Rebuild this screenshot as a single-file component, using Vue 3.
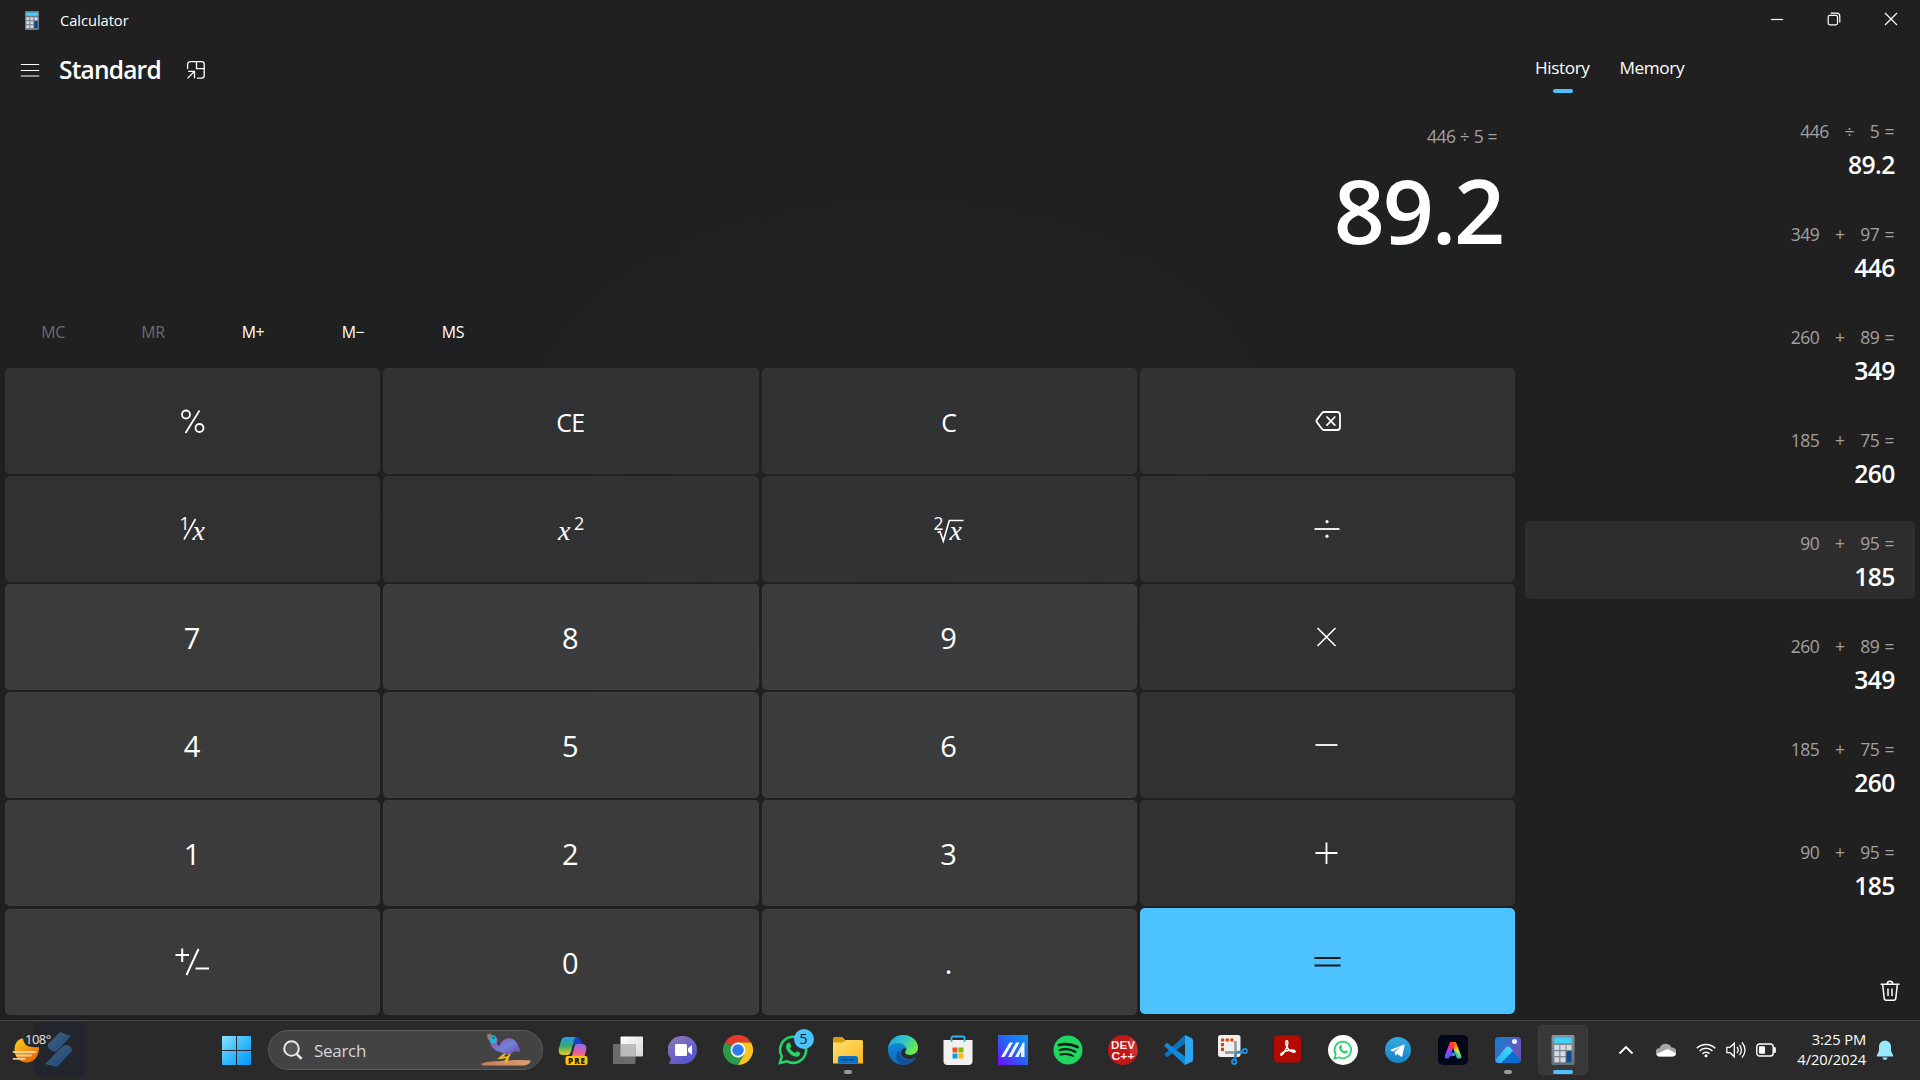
<script setup>
const memory = [
  { label: 'MC', off: true },
  { label: 'MR', off: true },
  { label: 'M+' },
  { label: 'M−' },
  { label: 'MS' },
]

const keys = [
  { icon: 'percent' }, { text: 'CE', fn: true }, { text: 'C', fn: true }, { icon: 'back' },
  { icon: 'inverse' }, { icon: 'square' }, { icon: 'root' }, { icon: 'divide' },
  { text: '7', num: true }, { text: '8', num: true }, { text: '9', num: true }, { icon: 'times' },
  { text: '4', num: true }, { text: '5', num: true }, { text: '6', num: true }, { icon: 'minus' },
  { text: '1', num: true }, { text: '2', num: true }, { text: '3', num: true }, { icon: 'plus' },
  { icon: 'sign', num: true, low: true }, { text: '0', num: true, low: true }, { text: '.', num: true, low: true }, { icon: 'equals', accent: true },
]

const history = [
  { expr: '446   ÷   5 =', result: '89.2' },
  { expr: '349   +   97 =', result: '446' },
  { expr: '260   +   89 =', result: '349' },
  { expr: '185   +   75 =', result: '260' },
  { expr: '90   +   95 =', result: '185', hover: true },
  { expr: '260   +   89 =', result: '349' },
  { expr: '185   +   75 =', result: '260' },
  { expr: '90   +   95 =', result: '185' },
]
</script>

<template>
  <div class="screen">
    <header class="titlebar">
      <svg class="app-icon" width="14" height="19" viewBox="0 0 14 19">
        <rect width="14" height="19" rx="1" fill="#6d7b87" />
        <rect x="1.3" y="1.5" width="11.4" height="3.3" fill="#3fd0fa" />
        <g fill="#d3dae2">
          <rect x="1.3" y="6.2" width="3" height="3" /><rect x="5.3" y="6.2" width="3" height="3" /><rect x="9.4" y="6.2" width="3.2" height="3" />
          <rect x="1.3" y="10.2" width="3" height="3" /><rect x="5.3" y="10.2" width="3" height="3" />
          <rect x="1.3" y="14.2" width="3" height="3" /><rect x="5.3" y="14.2" width="3" height="3" />
        </g>
        <rect x="9.4" y="10.2" width="3.2" height="7" fill="#0f4489" />
      </svg>
      <span class="app-name">Calculator</span>
      <div class="controls">
        <svg width="14" height="14" viewBox="0 0 14 14"><path d="M1 7.5h12" stroke="#fff" stroke-width="1.2" /></svg>
        <svg width="14" height="14" viewBox="0 0 14 14" fill="none" stroke="#fff" stroke-width="1.2"><rect x="1.2" y="3.3" width="9.3" height="9.5" rx="1.5" /><path d="M3.6 1.2h6.2a3 3 0 0 1 3 3v6.2" /></svg>
        <svg width="14" height="14" viewBox="0 0 14 14"><path d="M1 1l12 12M13 1L1 13" stroke="#fff" stroke-width="1.2" /></svg>
      </div>
    </header>

    <main class="body">
      <section class="calc">
        <div class="mode">
          <svg width="20" height="16" viewBox="0 0 20 16"><path d="M.8 2.5h18.4M.8 8.5h18.4M.8 14h18.4" stroke="#fff" stroke-width="1.2" /></svg>
          <h1>Standard</h1>
          <svg class="pin" width="20" height="20" viewBox="0 0 20 20" fill="none" stroke="#fff" stroke-width="1.3">
            <path d="M1.600 9V4.200a2.600 2.600 0 0 1 2.600-2.600h11.400a2.600 2.600 0 0 1 2.600 2.600v11.400a2.600 2.600 0 0 1-2.600 2.600H11" />
            <path d="M10.500 1.600v7h7.800M1.500 18.400l6.900-6.900M2.200 11.400h6.300v6.900" />
          </svg>
        </div>
        <div class="expression">446 ÷ 5 =</div>
        <div class="result">89.2</div>
        <div class="memory">
          <span v-for="m in memory" :key="m.label" :class="{ off: m.off }">{{ m.label }}</span>
        </div>
        <div class="pad">
          <div v-for="(k, i) in keys" :key="i" class="key" :class="{ num: k.num, fn: k.fn, accent: k.accent, low: k.low }">
            <span v-if="k.text">{{ k.text }}</span>
            <svg v-else width="40" height="40" viewBox="0 0 40 40" fill="none" stroke="#fff" stroke-width="1.8">
              <g v-if="k.icon === 'percent'"><circle cx="13" cy="13.500" r="4" /><circle cx="26.500" cy="27" r="4" /><path d="M26.500 9.500L12.500 32" /></g>
              <g v-else-if="k.icon === 'back'" stroke-linejoin="round" transform="translate(1 .5)"><path d="M16 10.500h13a3 3 0 0 1 3 3v12a3 3 0 0 1-3 3H16a2.500 2.500 0 0 1-2-1l-4.800-6.400a2.400 2.400 0 0 1 0-3.200L14 11.500a2.500 2.500 0 0 1 2-1z" /><path d="M18.500 15l8.800 9.200M27.300 15l-8.800 9.200" /></g>
              <g v-else-if="k.icon === 'inverse'">
                <path d="M22.500 10L11 30.500" stroke-width="1.600" />
                <text class="glyph" x="6.500" y="20.500" font-size="18">1</text>
                <text class="glyph italic" x="19.500" y="30.500" font-size="28">x</text>
              </g>
              <g v-else-if="k.icon === 'square'">
                <text class="glyph italic" x="7" y="30.500" font-size="28">x</text>
                <text class="glyph" x="23" y="21" font-size="18">2</text>
              </g>
              <g v-else-if="k.icon === 'root'">
                <text class="glyph" x="4.500" y="20.500" font-size="17.500">2</text>
                <path d="M8.500 23.500l2.500-1 3.300 9.500L20.300 11.500H34.500" stroke-width="1.600" />
                <text class="glyph italic" x="20.500" y="30.500" font-size="28">x</text>
              </g>
              <g v-else-if="k.icon === 'divide'"><path d="M7.500 20h25" /><g fill="#fff" stroke="none"><circle cx="20" cy="12.700" r="1.600" /><circle cx="20" cy="27.200" r="1.600" /></g></g>
              <path v-else-if="k.icon === 'times'" d="M10.500 11l18 18M28.500 11L10.500 29" stroke-width="1.600" />
              <path v-else-if="k.icon === 'minus'" d="M8.500 20h22" />
              <path v-else-if="k.icon === 'plus'" d="M8.500 20h22M19.500 9.500v21.500" />
              <g v-else-if="k.icon === 'sign'"><path d="M2.500 13h13.500M9.200 6.500v13.500M25.500 7L13.500 33M22.500 26.500h13.500" stroke-width="2" /></g>
              <path v-else d="M7.500 17h26M7.500 24.500h26" stroke="#0b1a24" stroke-width="1.800" />
            </svg>
          </div>
        </div>
      </section>

      <aside class="side">
        <nav class="tabs">
          <div class="tab active">History</div>
          <div class="tab">Memory</div>
        </nav>
        <div class="list">
          <div v-for="(h, i) in history" :key="i" class="item" :class="{ hover: h.hover }">
            <div class="expr">{{ h.expr }}</div>
            <div class="value">{{ h.result }}</div>
          </div>
        </div>
        <svg class="trash" width="20" height="22" viewBox="0 0 20 22" fill="none" stroke="#fff" stroke-width="1.500">
          <path d="M.5 4.200h19M7.300 4a2.700 2.700 0 0 1 5.400 0M2.700 4.500l1.500 13.800a2 2 0 0 0 2 1.900h7.600a2 2 0 0 0 2-1.900L17.300 4.500M8 8.500v7.500M12 8.500v7.500" />
        </svg>
      </aside>
    </main>

    <footer class="taskbar">
      <div class="weather">
        <div class="blob">
          <svg width="52" height="54" viewBox="0 0 52 54">
            <defs><linearGradient id="ribbon" x1="0" y1="0" x2="1" y2="1"><stop offset="0" stop-color="#43607a" /><stop offset="1" stop-color="#1d4a7c" /></linearGradient></defs>
            <path d="M26 10l11 4-15 16c-5-1-9-4-8-8z" fill="url(#ribbon)" />
            <path d="M28 25c5-4 10-1 10 4L23 45 11 42z" fill="url(#ribbon)" />
          </svg>
        </div>
        <svg class="sun" width="28" height="26" viewBox="0 0 28 26">
          <defs><linearGradient id="sunfill" x1="0" y1="0" x2=".6" y2="1"><stop offset="0" stop-color="#ffd21c" /><stop offset="1" stop-color="#e8690b" /></linearGradient></defs>
          <path d="M11 .5C12 8 17 10 27 9c.5 9-5 15.500-12 15.500S2.500 19 2.500 12 6 1 11 .500z" fill="url(#sunfill)" />
          <path d="M1.500 14h22M5 17.500h14M1.500 20.800h11" stroke="#f3d9a0" stroke-width="1.800" stroke-linecap="round" opacity=".9" />
        </svg>
        <span class="temp">108°</span>
      </div>

      <div class="dock">
        <svg class="start" width="29" height="29" viewBox="0 0 29 29">
          <defs><linearGradient id="win" x1="0" y1="0" x2="1" y2="1"><stop offset="0" stop-color="#8be2ff" /><stop offset=".5" stop-color="#36bafa" /><stop offset="1" stop-color="#0796fb" /></linearGradient></defs>
          <path d="M1 0h13v14H0V1a1 1 0 0 1 1-1zM15 0h13a1 1 0 0 1 1 1v13H15zM0 15h14v14H1a1 1 0 0 1-1-1zM15 15h14v13a1 1 0 0 1-1 1H15z" fill="url(#win)" />
        </svg>
        <div class="search">
          <svg width="20" height="20" viewBox="0 0 20 20" fill="none" stroke="#e8e8e8"><circle cx="8.500" cy="8.500" r="7.300" stroke-width="2" fill="#555" /><path d="M13.600 13.800l5 5" stroke-width="2.600" /></svg>
          <span>Search</span>
          <svg class="bird" width="52" height="34" viewBox="0 0 52 34">
            <defs>
              <linearGradient id="feather" x1="0" y1="0" x2="1" y2="1"><stop offset="0" stop-color="#b0609c" /><stop offset=".3" stop-color="#8a63b8" /><stop offset=".55" stop-color="#6a86d6" /><stop offset=".75" stop-color="#7b62c4" /><stop offset="1" stop-color="#4d60bd" /></linearGradient>
              <linearGradient id="sand" x1="0" y1="0" x2="1" y2="0"><stop offset="0" stop-color="#c97b58" /><stop offset="1" stop-color="#dba26d" /></linearGradient>
            </defs>
            <path d="M1 31c5-2.500 12-2.500 19-3 11-1 24-1.500 30-.5 2 1-2 5-6 5H3z" fill="url(#sand)" />
            <path d="M26 20l-6 5 8-1-3 5M30 20l-4 10" stroke="#f2b927" stroke-width="1.800" fill="none" />
            <path d="M14 3c2 1 4 2 3.500 5-1 3-.5 5 2 4.500 3-6 8-8.500 13-6.500 4 2 6 6 8 13-3-.5-4 0-6-1-4 4-10 4-14 1-5-1-9-4-10-9 1-3 1-5 3.500-7z" fill="url(#feather)" />
            <path d="M10 2.500c4-1 6.500.5 6.500 4 0 2-1 4-3.500 4-2.500 0-3.500-1.500-3.500-3z" fill="#25b3d6" />
            <path d="M7 1.500l4-1L11.500 4 8 7.500z" fill="#9c7a70" />
            <circle cx="13.500" cy="5" r=".9" fill="#122" />
          </svg>
        </div>

        <div class="apps">
          <div class="slot">
            <svg width="30" height="30" viewBox="0 0 30 30">
              <defs>
                <linearGradient id="cop1" x1="0" y1="0" x2="0" y2="1"><stop offset="0" stop-color="#1d9df0" /><stop offset=".5" stop-color="#3aa96d" /><stop offset="1" stop-color="#ead21f" /></linearGradient>
                <linearGradient id="cop2" x1="0" y1="0" x2="0" y2="1"><stop offset="0" stop-color="#8e6bee" /><stop offset=".6" stop-color="#ee5c9a" /><stop offset="1" stop-color="#f7a04b" /></linearGradient>
              </defs>
              <path d="M14 2h5c3 0 4 3 5 7h-6c-3 0-4 3-5 6z" fill="#1443c4" />
              <path d="M8 2h11c-3 0-3 3-4.500 9-1.500 6-2 9-5 9H5c-4 0-5-3-4-7l2-7c1-3 2-4 5-4z" fill="url(#cop1)" />
              <path d="M19 9h5c4 0 5 3 4 7-1 3-1 8-6 8H11c3 0 3-4 4.500-9S17 9 19 9z" fill="url(#cop2)" />
              <rect x="7.500" y="21" width="22" height="9" rx="2" fill="#f9c60d" />
              <text x="10" y="28.500" class="badge-text" font-size="8" textLength="17">PRE</text>
            </svg>
          </div>
          <div class="slot">
            <svg width="30" height="30" viewBox="0 0 30 30">
              <defs><linearGradient id="tv" x1="0" y1="0" x2="1" y2="1"><stop offset="0" stop-color="#fff" /><stop offset="1" stop-color="#d6d6d6" /></linearGradient></defs>
              <rect x="7.500" y="1.500" width="22.500" height="20" rx="1" fill="url(#tv)" /><rect x="0" y="9" width="22.500" height="20" rx="1" fill="#6c6c6c" /><rect x="7.500" y="9" width="15" height="12.500" fill="#bcbcbc" />
            </svg>
          </div>
          <div class="slot">
            <svg width="30" height="30" viewBox="0 0 30 30">
              <defs><linearGradient id="chat" x1="0" y1="0" x2=".7" y2="1"><stop offset="0" stop-color="#9179b8" /><stop offset="1" stop-color="#5355cd" /></linearGradient></defs>
              <path d="M15 1a14 14 0 1 1 0 28H2c-1 0-1-1-.5-1.500L3 24A14 14 0 0 1 15 1z" fill="url(#chat)" />
              <rect x="7" y="9" width="12" height="12" rx="1.500" fill="#fff" /><path d="M20 13.500l4-3.500v10l-4-3.500z" fill="#fff" />
            </svg>
          </div>
          <div class="slot">
            <svg width="30" height="30" viewBox="0 0 30 30">
              <path d="M15 15L2 7.500A15 15 0 0 1 28 7.500H15z" fill="#e33b2e" />
              <path d="M15 15L2 7.500A15 15 0 0 0 15 30l6.500-11.200z" fill="#2a9a4a" />
              <path d="M15 15V7.500h13A15 15 0 0 1 15 30l6.500-11.200z" fill="#fcc31e" />
              <circle cx="15" cy="15" r="7.400" fill="#fff" /><circle cx="15" cy="15" r="5.800" fill="#2f7bed" />
            </svg>
          </div>
          <div class="slot">
            <svg width="30" height="30" viewBox="0 0 30 30" fill="none" stroke="#25d366">
              <path d="M2 28l1.800-6.800A13 13 0 1 1 9 26.300z" stroke-width="2.600" />
              <path d="M9.500 8.500c1-1.500 2.200-1 2.700 0l1 2.400c.3.700-1.200 1.900-1.200 2.400 1 2.200 2.700 3.700 5 4.600.6 0 1.500-2 2.200-1.700l2.800 1.500c.6 2-1.200 4-3.300 4.100C13.500 21.800 8 16 8 11.500c0-1.200.6-2.300 1.500-3z" fill="#25d366" stroke="none" />
            </svg>
            <span class="count">5</span>
          </div>
          <div class="slot open">
            <svg width="30" height="30" viewBox="0 0 30 30">
              <defs><linearGradient id="fold" x1="0" y1="0" x2="1" y2="1"><stop offset="0" stop-color="#ffdf70" /><stop offset="1" stop-color="#fcb91e" /></linearGradient></defs>
              <path d="M0 3.500a1.500 1.500 0 0 1 1.500-1.500h8l3 3.200H28V10H0z" fill="#dd9b0b" />
              <path d="M0 7.500h9.500L13 5h15.500A1.500 1.500 0 0 1 30 6.500v22H0z" fill="url(#fold)" />
              <path d="M5 28.500v-5A2.500 2.500 0 0 1 7.500 21h15a2.500 2.500 0 0 1 2.500 2.500v5z" fill="#0c6fc6" /><path d="M8.500 24.700h12.500" stroke="#0a3f79" stroke-width="1.200" />
            </svg>
          </div>
          <div class="slot">
            <svg width="30" height="30" viewBox="0 0 30 30">
              <defs>
                <linearGradient id="edge1" x1="0" y1="0" x2="1" y2=".5"><stop offset="0" stop-color="#1e9ede" /><stop offset=".5" stop-color="#2ec3d1" /><stop offset="1" stop-color="#6bea48" /></linearGradient>
                <linearGradient id="edge2" x1="0" y1="0" x2="0" y2="1"><stop offset="0" stop-color="#1293dd" /><stop offset="1" stop-color="#0b67c2" /></linearGradient>
              </defs>
              <circle cx="15" cy="15" r="15" fill="url(#edge2)" />
              <path d="M11.500 15.500c-1 7 7 12 16 7.500-3 5-8 7-12.500 7C8 29.500 6 18 11.500 15.500z" fill="#10519a" />
              <path d="M0 14C1 5 8 0 15 0c9 0 15 6 15 12.500 0 5-4 7.500-8 7.500-3 0-5-1-5-2.500 0-1 1.300-1.600 1.300-4C18.300 11 15 8 10.500 8 5 8 1 11 0 14z" fill="url(#edge1)" />
              <path d="M18.300 13.500c0 2.400-1.300 3-1.300 4 0 1.500 2 2.500 5 2.500 3 0 5-1.200 6.500-2.500L30 15l-1.500 7c-6 4-14 2-15.500-3-.7-3 1.500-6.500 5.300-5.500z" fill="#2b2b2b" />
            </svg>
          </div>
          <div class="slot">
            <svg width="30" height="30" viewBox="0 0 30 30">
              <path d="M8.500 7V3a1.500 1.500 0 0 1 1.500-1.500h10A1.500 1.500 0 0 1 21.500 3v4" fill="none" stroke="#2fb5ea" stroke-width="1.800" />
              <path d="M.5 5h29v21a4 4 0 0 1-4 4h-21a4 4 0 0 1-4-4z" fill="#f1f1f1" /><path d="M8.500 5v2M21.500 5v2" stroke="#2fb5ea" stroke-width="1.800" />
              <path d="M9.500 12.500h5v5h-5z" fill="#f25022" /><path d="M15.500 12.500h5v5h-5z" fill="#7fba00" /><path d="M9.500 18.500h5v5h-5z" fill="#00a4ef" /><path d="M15.500 18.500h5v5h-5z" fill="#ffb900" />
            </svg>
          </div>
          <div class="slot">
            <svg width="30" height="30" viewBox="0 0 30 30">
              <defs><linearGradient id="asus" x1="1" y1="0" x2="0" y2="1"><stop offset="0" stop-color="#079af5" /><stop offset=".5" stop-color="#2b62f6" /><stop offset="1" stop-color="#6f0cf6" /></linearGradient></defs>
              <rect width="30" height="30" fill="url(#asus)" />
              <path d="M3 22L11.500 7.500h3.500L6.500 22zM10 22l8-14.500h3.500L13.500 22zM17 22l8-14.500h1.500V22h-3.500v-5.500L20.500 22z" fill="#eef3ff" />
            </svg>
          </div>
          <div class="slot">
            <svg width="30" height="30" viewBox="0 0 30 30" fill="none" stroke="#101a13" stroke-linecap="round">
              <circle cx="15" cy="15" r="14.500" fill="#1ed760" stroke="none" />
              <path d="M6 10c6-1.600 13-1 18.500 2" stroke-width="2.800" /><path d="M6.800 15c5-1.400 11-.8 15.500 1.800" stroke-width="2.300" /><path d="M7.500 19.500c4.500-1 9-.5 12.700 1.500" stroke-width="1.900" />
            </svg>
          </div>
          <div class="slot">
            <svg width="30" height="30" viewBox="0 0 30 30">
              <circle cx="15" cy="15" r="15" fill="#c01818" /><path d="M22 2a15 15 0 0 1 6 20c-8-2-9-12-6-20z" fill="#da3434" opacity=".7" />
              <text x="3" y="14.300" class="dev" font-size="10" textLength="24" lengthAdjust="spacingAndGlyphs">DEV</text><text x="3.500" y="25" class="dev" font-size="10" textLength="23" lengthAdjust="spacingAndGlyphs">C++</text>
            </svg>
          </div>
          <div class="slot">
            <svg width="30" height="30" viewBox="0 0 30 30">
              <path d="M22 0L2 18.500c-.8.700-.8 1.200-.2 1.800l1.500 1.400c.5.400 1 .4 1.600 0L22 8.500z" fill="#0b74bd" />
              <path d="M22 30L2 11.500c-.8-.7-.8-1.200-.2-1.800l1.500-1.400c.5-.4 1-.4 1.600 0L22 21.500z" fill="#0f8ad8" />
              <path d="M22 0l6.500 3a2.500 2.500 0 0 1 1.500 2.300v19.400a2.500 2.500 0 0 1-1.500 2.300L22 30z" fill="#2ba7f3" />
            </svg>
          </div>
          <div class="slot">
            <svg width="30" height="30" viewBox="0 0 30 30">
              <rect width="22.500" height="22" rx="2.500" fill="#efefef" />
              <path d="M4.500 16V5h12" stroke="#d3430f" stroke-width="3" stroke-dasharray="3.200 1.500" fill="none" />
              <path d="M17.500 6v17M7 17.500h17" stroke="#8d9499" stroke-width="2.400" fill="none" />
              <path d="M18 18.500l-2 6M18.500 17.500l6-1.500" stroke="#1b87cf" stroke-width="2" />
              <circle cx="16.200" cy="26.800" r="2.200" fill="none" stroke="#1e95e4" stroke-width="1.800" /><circle cx="26.800" cy="16" r="2.200" fill="none" stroke="#1e95e4" stroke-width="1.800" />
            </svg>
          </div>
          <div class="slot">
            <svg width="30" height="30" viewBox="0 0 30 30">
              <rect x="1" y=".500" width="27" height="27" rx="4" fill="#b30b00" />
              <path d="M13.200 6c1.800-1 2 1.500 1 5-1.300 4-4.500 9.500-6 9.300-1.500-1 1.500-3.500 5.500-4.500 4-1 8-.8 8.500.5 0 1.700-4 .8-6.200-1.500S11.700 8 13.200 6z" fill="none" stroke="#fff" stroke-width="1.500" />
            </svg>
          </div>
          <div class="slot">
            <svg width="30" height="30" viewBox="0 0 30 30">
              <circle cx="15" cy="15" r="15" fill="#fff" />
              <path d="M6.500 23.500l1.200-4.300A8.300 8.300 0 1 1 11 22.300z" fill="none" stroke="#25d366" stroke-width="1.700" />
              <path d="M12 10.500c.6-.8 1.300-.6 1.600 0l.6 1.500c.2.500-.7 1.100-.7 1.500.6 1.300 1.600 2.200 3 2.800.4 0 .9-1.200 1.300-1l1.700.9c.3 1.200-.7 2.300-2 2.400-3 0-6.400-3.300-6.400-6.100 0-.8.300-1.500.9-2z" fill="#25d366" />
            </svg>
          </div>
          <div class="slot">
            <svg width="30" height="30" viewBox="0 0 30 30">
              <defs><linearGradient id="tg" x1="0" y1="0" x2="0" y2="1"><stop offset="0" stop-color="#35a9e0" /><stop offset="1" stop-color="#1683c0" /></linearGradient></defs>
              <circle cx="15" cy="15" r="13" fill="url(#tg)" /><path d="M7 15l13.500-5.300c.8-.3 1.200.2 1 1l-2.200 10.200c-.2.900-.8 1-1.500.6l-3.500-2.600-2 1.800-.7-3.700 6-5.200-7.600 4.600z" fill="#fff" />
            </svg>
          </div>
          <div class="slot">
            <div class="express"><i></i></div>
          </div>
          <div class="slot open">
            <svg width="30" height="30" viewBox="0 0 30 30">
              <defs><linearGradient id="ph" x1="0" y1="0" x2="1" y2=".6"><stop offset="0" stop-color="#0f80d7" /><stop offset="1" stop-color="#7350b5" /></linearGradient><linearGradient id="ph2" x1="0" y1="1" x2="1" y2="0"><stop offset="0" stop-color="#22b2ef" /><stop offset="1" stop-color="#48d8fb" /></linearGradient></defs>
              <rect x="2" y="2" width="26" height="26" rx="3.500" fill="url(#ph)" />
              <path d="M15 12.500L28 25a3.500 3.500 0 0 1-3.500 3H8z" fill="#0a6dd0" />
              <path d="M2.300 25.500L12.500 12.700c1.500-1.700 3.500-1.700 5 0l2.500 3L8 28H5.500a3.500 3.500 0 0 1-3.200-2.500z" fill="url(#ph2)" />
              <circle cx="21.500" cy="6.500" r="2.500" fill="#e9f0fd" />
            </svg>
          </div>
          <div class="slot current">
            <svg width="24" height="30" viewBox="0 0 24 30">
              <defs><linearGradient id="cbody" x1="0" y1="0" x2="0" y2="1"><stop offset="0" stop-color="#8b949c" /><stop offset="1" stop-color="#64717c" /></linearGradient></defs>
              <rect x=".5" width="23" height="30" rx="1.500" fill="url(#cbody)" /><rect x="3.300" y="2.800" width="17.400" height="5.400" rx=".5" fill="#3fd3fc" />
              <g fill="#d5dbe2"><rect x="3.300" y="10" width="5" height="5" /><rect x="9.400" y="10" width="5" height="5" /><rect x="15.500" y="10" width="5" height="5" /><rect x="3.300" y="16.200" width="5" height="5" /><rect x="9.400" y="16.200" width="5" height="5" /><rect x="3.300" y="22.300" width="5" height="5" /><rect x="9.400" y="22.300" width="5" height="5" /></g>
              <rect x="15.500" y="16.200" width="5" height="11.100" fill="#114a93" />
            </svg>
          </div>
        </div>
      </div>

      <div class="tray">
        <svg class="chev" width="16" height="10" viewBox="0 0 16 10"><path d="M1.500 8.500L8 2l6.500 6.500" fill="none" stroke="#fff" stroke-width="1.800" /></svg>
        <svg class="cloud" width="20" height="14" viewBox="0 0 20 14"><path d="M4 13.500A4 4 0 0 1 3.500 5 6.500 6.500 0 0 1 15.500 4.500a4.500 4.500 0 0 1 1 9z" fill="#a5a5a5" /><path d="M3.500 13.500c-2 0-3.500-1.500-2-3L11.500 6l8 4c1 1.500-.5 3.500-3 3.500z" fill="#fff" /></svg>
        <svg class="wifi" width="20" height="16" viewBox="0 0 20 16" fill="none" stroke="#fff" stroke-width="1.500"><path d="M.8 6.200a13 13 0 0 1 18.400 0M3.600 9a9 9 0 0 1 12.800 0M6.400 11.700a5 5 0 0 1 7.200 0" /><circle cx="10" cy="13.700" r="1.500" fill="#fff" stroke="none" /></svg>
        <svg class="vol" width="20" height="18" viewBox="0 0 20 18" fill="none" stroke="#fff" stroke-width="1.300"><path d="M.8 6.300h3.200L8.300 2.300v13.400L4 11.700H.8zM11 6c1.400 1.800 1.400 4.200 0 6M13.500 3.800c2.500 3 2.500 7.400 0 10.400M16 1.500c4 4.500 4 10.500 0 15" /></svg>
        <svg class="batt" width="21" height="14" viewBox="0 0 21 14" fill="none" stroke="#fff" stroke-width="1.400"><rect x=".8" y="1" width="16.400" height="12" rx="2.800" /><rect x="3" y="3.300" width="6" height="7.400" rx=".8" fill="#fff" stroke="none" /><path d="M18.700 5v4" stroke-width="2.200" stroke-linecap="round" /></svg>
        <div class="clock"><span>3:25 PM</span><span>4/20/2024</span></div>
        <svg class="bell" width="18" height="20" viewBox="0 0 18 20" fill="#98e9fe"><path d="M9 .5a6 6 0 0 1 6 6v4.300l2.200 4.700c.2.700-.1 1-.7 1h-15c-.6 0-.9-.3-.7-1L3 10.800V6.500a6 6 0 0 1 6-6zM6.500 17.500h5a2.500 2.500 0 0 1-5 0z" /></svg>
      </div>
    </footer>
  </div>
</template>

<style>
html, body { margin: 0; background: #202020; overflow: hidden; }
</style>

<style scoped>
.screen {
  width: 1920px; height: 1080px; display: flex; flex-direction: column; overflow: hidden;
  font-family: "Open Sans", "Noto Sans", sans-serif; color: #fff;
  background: radial-gradient(ellipse 700px 420px at 900px 420px, #1f2123 30%, #202020 100%);
}
svg { display: block; flex: none; }
.titlebar { height: 40px; display: flex; align-items: center; padding-left: 25px; }
.app-name { margin-left: 21px; font-size: 14.7px; letter-spacing: -.05px; line-height: 40px; }
.controls { margin-left: auto; display: flex; gap: 43px; padding: 0 22px 2px 0; }
.body { display: flex; height: 980px; flex: none; }
.calc { width: 1520px; padding-top: 5px; box-sizing: border-box; display: flex; flex-direction: column; }
.mode { height: 50px; display: flex; align-items: center; padding-left: 20px; }
.mode h1 { margin: 0 0 0 19px; font-size: 24.500px; font-weight: 600; letter-spacing: -.8px; line-height: 50px; }
.pin { margin-left: 25px; }
.expression { margin-top: 29px; height: 23px; line-height: 24px; text-align: right; padding-right: 23px; font-size: 17.500px; letter-spacing: -.500px; word-spacing: .3px; color: #a0a0a0; }
.result { height: 124px; line-height: 125px; text-align: right; padding-right: 17px; font-size: 89.500px; font-weight: 600; letter-spacing: -2.200px; }
.memory { margin-top: 33px; height: 56px; line-height: 56px; display: flex; padding-left: 3px; font-size: 15.900px; }
.memory span { width: 100px; text-align: center; letter-spacing: -.35px; }
.memory .off { color: #6c6c6c; }
.pad { margin: 8px 5px 0; display: grid; grid-template-columns: repeat(4, 1fr); grid-auto-rows: 106px; gap: 2px 3px; }
.key { display: flex; align-items: center; justify-content: center; border-radius: 5px; background: rgba(255, 255, 255, .08); box-shadow: inset 0 0 0 1px rgba(255, 255, 255, .015); font-size: 29px; }
.key.num { background: rgba(255, 255, 255, .122); }
.key.fn { font-size: 25px; letter-spacing: -.8px; }
.key.low { position: relative; top: 1px; }
.key.accent { background: #4cc2ff; }
.key span { line-height: 40px; padding: 2px 1px 0 0; }
.glyph { fill: #fff; stroke: none; font-family: "Open Sans", sans-serif; }
.italic { font-family: "Liberation Serif", serif; font-style: italic; }
.side { width: 400px; box-sizing: border-box; padding: 5px 5px 0; display: flex; flex-direction: column; }
.tabs { display: flex; gap: 30px; padding-left: 10px; height: 64px; font-size: 17.200px; letter-spacing: -.4px; }
.tab { line-height: 46px; height: 48px; }
.tab.active::after { content: ""; display: block; width: 20px; height: 4px; margin: -2px auto 0; border-radius: 2px; background: #4cc2ff; position: relative; left: 1px; }
.list { display: flex; flex-direction: column; gap: 25px; }
.item { height: 78px; box-sizing: border-box; padding: 10px 20px 0 0; border-radius: 5px; text-align: right; }
.item.hover { background: #2d2d2d; }
.expr { line-height: 24px; font-size: 17.500px; letter-spacing: -.500px; word-spacing: 1.200px; white-space: pre; color: #a0a0a0; padding-right: 1px; }
.value { margin-top: 4px; line-height: 36px; font-size: 24.700px; font-weight: 600; letter-spacing: -.5px; }
.trash { margin: 72px 15px 0 auto; }
.taskbar { height: 60px; box-sizing: border-box; border-top: 1px solid #4a4a4a; padding-bottom: 1px; background: #2a2a2a; display: flex; align-items: center; position: relative; flex: none; }
.weather { position: relative; width: 222px; height: 58px; }
.blob { position: absolute; left: 34px; top: 1px; width: 53px; height: 55px; border-radius: 8px; background: #23252c; }
.sun { position: absolute; left: 12px; top: 17px; }
.temp { position: absolute; left: 25px; top: 9px; font-size: 13px; line-height: 18px; letter-spacing: -.5px; color: #e4e4e4; }
.dock { display: flex; align-items: center; }
.search { margin-left: 17px; width: 275px; height: 40px; box-sizing: border-box; border: 1px solid #5a5a5a; border-radius: 20px; background: #434343; display: flex; align-items: center; padding-left: 14px; }
.search span { margin-left: 11px; font-size: 17px; letter-spacing: -.3px; color: #d6d6d6; }
.bird { margin-left: auto; margin-right: 10px; }
.apps { display: flex; margin-left: 2.500px; }
.slot { width: 55px; height: 50px; display: flex; align-items: center; justify-content: center; position: relative; }
.slot.open::after { content: ""; position: absolute; left: 23.500px; bottom: 1px; width: 8px; height: 4px; border-radius: 2px; background: #9a9a9a; }
.slot.current { width: 50px; margin-left: 2.500px; border-radius: 5px; background: #383838; box-shadow: inset 0 0 0 1px #3f3f3f; }
.slot.current::after { content: ""; position: absolute; left: 15px; bottom: 1px; width: 20px; height: 4px; border-radius: 2px; background: #4cc2ff; }
.count { position: absolute; left: 28px; top: 4px; width: 20px; height: 20px; border-radius: 50%; background: #4cc2ff; color: #0c1c26; font-size: 14px; line-height: 20px; text-align: center; }
.badge-text { font-family: "Open Sans", sans-serif; font-weight: 800; fill: #1b1705; }
.dev { font-family: "Liberation Sans", sans-serif; font-weight: 700; fill: #f6e9e9; }
.express { width: 30px; height: 30px; border-radius: 5px; background: #020817; display: flex; align-items: center; justify-content: center; }
.express i { width: 17px; height: 17px; background: conic-gradient(from 0deg at 50% 45%, #ff4b1c, #ffb300 18%, #b7f04a 33%, #39c8a0 40%, #3c5cff 58%, #b63cff 72%, #ff2a62 88%, #ff4b1c); clip-path: polygon(33% 3%, 42% 0, 58% 0, 67% 3%, 100% 88%, 94% 100%, 76% 100%, 70% 92%, 50% 38%, 42% 64%, 60% 64%, 62% 84%, 30% 88%, 24% 100%, 6% 100%, 0 88%); }
.tray { margin-left: auto; display: flex; align-items: center; padding-right: 26px; }
.cloud { margin-left: 22px; }
.wifi { margin-left: 20px; }
.vol { margin-left: 10px; }
.batt { margin-left: 10px; }
.clock { width: 89px; display: flex; flex-direction: column; text-align: right; font-size: 14.700px; line-height: 20px; letter-spacing: -.1px; padding-bottom: 2px; }
.bell { margin-left: 10px; }
</style>
